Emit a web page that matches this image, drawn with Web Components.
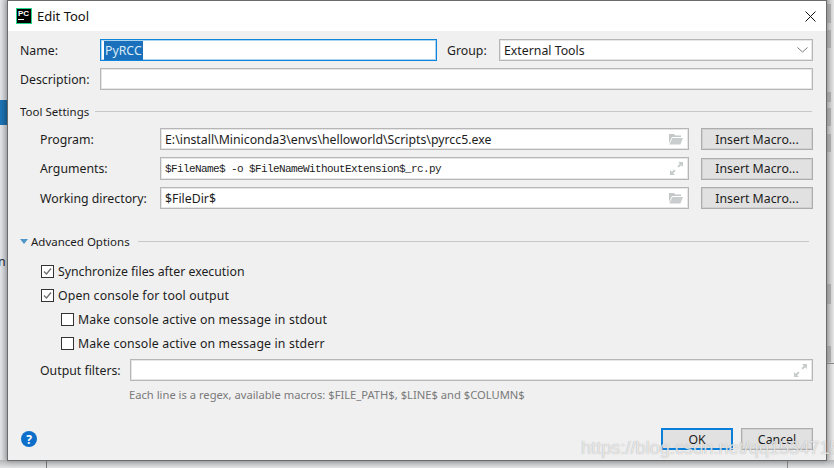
<!DOCTYPE html>
<html lang="en">
<head>
<meta charset="utf-8">
<title>Edit Tool</title>
<style>
  html, body { margin: 0; height: 100%; }
  body {
    width: 834px; height: 468px; overflow: hidden; position: relative;
    background: #e6e6e8;
    font: 12.3px "Noto Sans", "Open Sans", sans-serif;
    color: #1c1c1c;
  }
  .tool-grid {
    display: grid;
    grid-template-columns: 108px 529px 112px;
    column-gap: 12px;
    padding-left: 20px;
    margin-top: 9px;
    align-items: center;
    white-space: nowrap;
  }
  .name-row { display: grid; grid-template-columns: 68px 337px 38px 314px; column-gap: 12px; align-items: center; }
  .name-row span:nth-child(3) { margin-left: -2px; }
  .desc-row { display: grid; grid-template-columns: 68px 713px; column-gap: 12px; align-items: center; margin-top: 7px; white-space: nowrap; }
  .filter-row { display: grid; grid-template-columns: 90px 683px; align-items: center; padding-left: 20px; margin-top: 4px; }
  .hint { margin: 6px 0 0 109px; height: 16px; line-height: 16px; font-size: 11.2px; color: #7a7a7a; white-space: nowrap; }
  .footer { display: flex; align-items: center; margin-top: 25px; }
  .footer .spacer { flex: 1; }
  .footer push-button { width: 72px; margin-left: 8px; }
  .sel { background: #1a70bb; color: #d9ecf7; padding: 1px; margin-left: -1px; }
</style>
</head>
<body>

<ide-backdrop></ide-backdrop>

<edit-dialog title-text="Edit Tool">
  <div class="name-row">
    <span>Name:</span>
    <text-field focused><span class="sel">PyRCC</span></text-field>
    <span>Group:</span>
    <text-field icon="chevron">External Tools</text-field>
  </div>
  <div class="desc-row">
    <span>Description:</span>
    <text-field></text-field>
  </div>

  <section-title style="margin-top:13px" line-gap="6" line-end="1">Tool Settings</section-title>

  <div class="tool-grid">
    <span>Program:</span>
    <text-field icon="folder">E:\install\Miniconda3\envs\helloworld\Scripts\pyrcc5.exe</text-field>
    <push-button>Insert Macro...</push-button>
  </div>
  <div class="tool-grid" style="margin-top:7px">
    <span>Arguments:</span>
    <text-field icon="expand" mono tall>$FileName$ -o $FileNameWithoutExtension$_rc.py</text-field>
    <push-button tall>Insert Macro...</push-button>
  </div>
  <div class="tool-grid" style="margin-top:7px">
    <span>Working directory:</span>
    <text-field icon="folder">$FileDir$</text-field>
    <push-button>Insert Macro...</push-button>
  </div>

  <section-title style="margin-top:24px" line-gap="8" line-end="4" collapsible>Advanced Options</section-title>

  <div style="margin-top:10px">
    <check-row indent="1" checked>Synchronize files after execution</check-row>
    <check-row indent="1" checked style="letter-spacing:.14px">Open console for tool output</check-row>
    <check-row indent="2" style="letter-spacing:.14px">Make console active on message in stdout</check-row>
    <check-row indent="2" style="letter-spacing:.14px">Make console active on message in stderr</check-row>
  </div>

  <div class="filter-row">
    <span>Output filters:</span>
    <text-field icon="expand"></text-field>
  </div>
  <div class="hint">Each line is a regex, available macros: $FILE_PATH$, $LINE$ and $COLUMN$</div>

  <div class="footer">
    <help-icon></help-icon>
    <span class="spacer"></span>
    <push-button default>OK</push-button>
    <push-button>Cancel</push-button>
  </div>
</edit-dialog>

<blog-watermark>https://blog.csdn.net/qq153471503</blog-watermark>

<script>
  // Iconos de los campos de texto
  const ICONOS = {
    folder: `<svg width="15" height="12" viewBox="0 0 15 12"><path d="M1 1h5l1.2 1.5H13V4H4L1 10z" fill="#c3c8c8"/><path d="M4.4 5H15l-2.6 6.5H1.2z" fill="#c9cdcd"/></svg>`,
    expand: `<svg width="13" height="13" viewBox="0 0 13 13"><path d="M8 0h5v5l-1.8-1.8-2.4 2.4-1.4-1.4 2.4-2.4z" fill="#c6cbcb"/><path d="M0 13V8l1.8 1.8 2.4-2.4 1.4 1.4-2.4 2.4L5 13z" fill="#c6cbcb"/></svg>`,
    chevron: `<svg width="11" height="6" viewBox="0 0 11 6"><path d="M.5.5l5 4.5 5-4.5" fill="none" stroke="#777" stroke-width="1"/></svg>`
  };

  class IdeBackdrop extends HTMLElement {
    constructor() {
      super();
      this.attachShadow({ mode: "open" }).innerHTML = `
        <style>
          :host { position: absolute; inset: 0; display: block; overflow: hidden; }
          div { position: absolute; }
          .izq { left: 0; top: 0; width: 8px; height: 468px; background: linear-gradient(90deg, #e4e5e7, #b9bbc0); }
          .azul { left: 0; top: 100px; width: 8px; height: 25px; background: linear-gradient(90deg, #1d75b8, #1a6299); }
          .letra { left: -2px; top: 253px; font: 12.3px "Noto Sans", sans-serif; color: #223; }
          .der { left: 827px; top: 0; width: 7px; height: 363px; background: linear-gradient(90deg, #bdbdbd, #e8e8e8); }
          .der2 { left: 827px; top: 364px; width: 7px; height: 104px; background: linear-gradient(90deg, #c8c8c8, #ececec); }
          .linea { left: 827px; top: 363px; width: 7px; height: 1px; background: #8a8a8a; }
          .bloque { left: 827px; width: 4px; background: #b0b0b0; }
          .abajo { left: 0; top: 460px; width: 834px; height: 8px; background: linear-gradient(180deg, #b5b6b8, #e2e3e4); }
          .v1 { left: 46px; top: 461px; width: 1px; height: 7px; background: #777; }
          .v2 { left: 787px; top: 461px; width: 1px; height: 7px; background: #888; }
        </style>
        <div class="izq"></div><div class="azul"></div><div class="letra">n</div>
        <div class="der"></div><div class="der2"></div><div class="linea"></div>
        <div class="bloque" style="top:4px;height:19px"></div>
        <div class="bloque" style="top:30px;height:18px"></div>
        <div class="bloque" style="top:92px;height:10px"></div>
        <div class="bloque" style="top:108px;height:18px"></div>
        <div class="bloque" style="top:134px;height:18px"></div>
        <div class="bloque" style="top:284px;height:20px"></div>
        <div class="bloque" style="top:346px;height:16px"></div>
        <div class="abajo"></div><div class="v1"></div><div class="v2"></div>
      `;
    }
  }

  class EditDialog extends HTMLElement {
    constructor() {
      super();
      this.attachShadow({ mode: "open" }).innerHTML = `
        <style>
          :host {
            position: absolute; left: 7px; top: 0; width: 820px; height: 461px;
            box-sizing: border-box; display: flex; flex-direction: column;
            background: #f0f0f0; border: 1px solid #6b6b6b;
            box-shadow: 0 0 6px rgba(0,0,0,.3);
          }
          .titulo { height: 30px; background: #fff; display: flex; align-items: center; padding: 0 10px 0 8px; flex: none; }
          .logo { width: 16px; height: 16px; box-sizing: border-box; border: 1px solid #21d789; background: #000;
            display: flex; flex-direction: column; padding: 1px 0 0 1px; margin-right: 5px; }
          .logo b { font: bold 8px/7px "Liberation Sans", sans-serif; color: #fff; }
          .logo i { display: block; width: 6px; height: 1px; background: #fff; margin-top: 2px; }
          .nombre { flex: 1; font-size: 13px; color: #111; }
          .cuerpo { padding: 8px 13px 0 12px; flex: 1; }
        </style>
        <div class="titulo">
          <span class="logo"><b>PC</b><i></i></span>
          <span class="nombre">${this.getAttribute("title-text")}</span>
          <svg width="11" height="11" viewBox="0 0 11 11"><path d="M.5.5l10 10M10.5.5l-10 10" stroke="#111" stroke-width="1" fill="none"/></svg>
        </div>
        <div class="cuerpo"><slot></slot></div>
      `;
    }
  }

  class TextField extends HTMLElement {
    constructor() {
      super();
      const icono = ICONOS[this.getAttribute("icon")] || "";
      this.attachShadow({ mode: "open" }).innerHTML = `
        <style>
          :host {
            display: flex; align-items: center; box-sizing: border-box; height: 22px;
            background: #fff; border: 1px solid #b6b6b6; box-shadow: inset 0 0 0 1px rgba(182,182,182,.35);
            padding: 0 5px 0 4px; white-space: nowrap; overflow: hidden; color: #1c1c1c;
          }
          :host([tall]) { height: 23px; }
          :host([focused]) { border-color: #0f84d8; box-shadow: inset 0 0 0 1px rgba(15,132,216,.35); }
          :host([mono]) .txt { font: 11px "Liberation Mono", monospace; letter-spacing: -.6px; padding-top: 1px; }
          .txt { flex: 1; }
          .ico { display: flex; }
          :host([icon="chevron"]) { padding-right: 4px; }
        </style>
        <span class="txt"><slot></slot></span>
        <span class="ico">${icono}</span>
      `;
    }
  }

  class PushButton extends HTMLElement {
    constructor() {
      super();
      this.attachShadow({ mode: "open" }).innerHTML = `
        <style>
          :host {
            display: flex; align-items: center; justify-content: center; box-sizing: border-box; height: 22px;
            background: #e1e1e1; border: 1px solid #adadad; box-shadow: inset 0 0 0 1px rgba(173,173,173,.3);
            color: #1c1c1c;
          }
          :host([default]) { border: 2px solid #0a7fd9; box-shadow: none; }
        </style>
        <slot></slot>
      `;
    }
  }

  class SectionTitle extends HTMLElement {
    constructor() {
      super();
      const flecha = this.hasAttribute("collapsible")
        ? `<svg width="8" height="5" viewBox="0 0 8 5" style="margin-right:3px"><path d="M0 0h8L4 5z" fill="#4f97c9"/></svg>`
        : "";
      this.attachShadow({ mode: "open" }).innerHTML = `
        <style>
          :host { display: flex; align-items: center; height: 16px; font-size: 11.5px; white-space: nowrap; }
          .linea { flex: 1; height: 1px; background: #c8c8c8; margin-left: ${this.getAttribute("line-gap")}px; margin-right: ${this.getAttribute("line-end")}px; }
        </style>
        ${flecha}<slot></slot><span class="linea"></span>
      `;
    }
  }

  class CheckRow extends HTMLElement {
    constructor() {
      super();
      const marcado = this.hasAttribute("checked")
        ? `<path d="M3 6.5l2.5 2.5L10 3.5" fill="none" stroke="#6f6f6f" stroke-width="1.3"/>`
        : "";
      this.attachShadow({ mode: "open" }).innerHTML = `
        <style>
          :host { display: flex; align-items: center; height: 24px; padding-left: ${this.getAttribute("indent") * 20 + 1}px; white-space: nowrap; }
          svg { margin-right: 4px; flex: none; }
        </style>
        <svg width="13" height="13" viewBox="0 0 13 13">
          <rect x=".5" y=".5" width="12" height="12" fill="#fff" stroke="#333"/>${marcado}
        </svg>
        <slot></slot>
      `;
    }
  }

  class HelpIcon extends HTMLElement {
    constructor() {
      super();
      this.attachShadow({ mode: "open" }).innerHTML = `
        <style>
          :host {
            display: flex; align-items: center; justify-content: center; width: 16px; height: 16px;
            border-radius: 50%; background: #0e6fcb; color: #fff; font: bold 12px "Noto Sans", sans-serif; margin-left: 1px;
          }
        </style>
        ?
      `;
    }
  }

  class BlogWatermark extends HTMLElement {
    constructor() {
      super();
      this.attachShadow({ mode: "open" }).innerHTML = `
        <style>
          :host {
            position: absolute; left: 581px; top: 438px; white-space: nowrap;
            font: 18.2px "Liberation Sans", sans-serif; color: rgba(255,255,255,.72);
            text-shadow: 0 0 1px rgba(90,90,90,.55);
          }
        </style>
        <slot></slot>
      `;
    }
  }

  customElements.define("ide-backdrop", IdeBackdrop);
  customElements.define("edit-dialog", EditDialog);
  customElements.define("text-field", TextField);
  customElements.define("push-button", PushButton);
  customElements.define("section-title", SectionTitle);
  customElements.define("check-row", CheckRow);
  customElements.define("help-icon", HelpIcon);
  customElements.define("blog-watermark", BlogWatermark);
</script>
</body>
</html>
